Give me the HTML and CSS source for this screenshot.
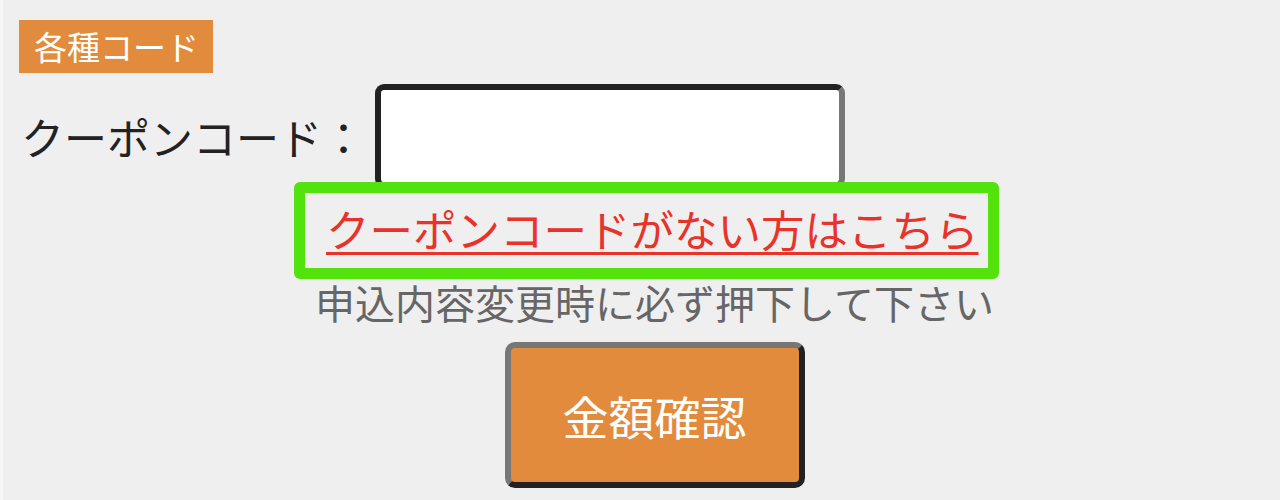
FILE: index.html
```html
<!DOCTYPE html>
<html lang="ja">
<head>
    <meta charset="UTF-8">
    <meta name="viewport" content="width=device-width, initial-scale=1.0">
    <title>各種コード</title>
    <link rel="stylesheet" href="styles.css">
</head>
<body>
    <div class="page">
        <div class="badge">各種コード</div>
        <div class="coupon-row">
            <label class="coupon-label" for="coupon">クーポンコード：</label>
            <input type="text" id="coupon" class="coupon-input">
        </div>
        <div class="actions">
            <a href="#" class="no-coupon">クーポンコードがない方はこちら</a>
            <p class="note">申込内容変更時に必ず押下して下さい</p>
            <button class="confirm">金額確認</button>
        </div>
    </div>
</body>
</html>
```

FILE: styles.css
```css
body {
    margin: 0;
    background-color: #efefef;
    font-family: "Noto Sans CJK JP", "Noto Sans", sans-serif;
    color: #222222;
}
.page {
    min-height: 100vh;
    box-sizing: border-box;
    border-left: 3px solid #f6f6f6;
    padding: 20px 0 0 16px;
}
.badge {
    display: inline-block;
    background-color: #e38b3c;
    color: #ffffff;
    font-size: 33px;
    line-height: 53px;
    padding: 0 14px 0 15px;
}
.coupon-row {
    display: flex;
    align-items: flex-start;
    margin-top: 11px;
}
.coupon-label {
    font-size: 43px;
    line-height: 104px;
    margin-left: 2px;
    width: 354px;
    white-space: nowrap;
}
.coupon-input {
    box-sizing: border-box;
    width: 470px;
    height: 104px;
    border: 6px solid;
    border-color: #222222 #777777 #777777 #222222;
    border-radius: 9px;
    background-color: #ffffff;
    font-size: 40px;
    outline: none;
}
.actions {
    display: flex;
    flex-direction: column;
    align-items: center;
    padding-left: 10px;
}
.no-coupon {
    position: relative;
    display: block;
    margin-top: -6px;
    margin-left: -16px;
    width: 705px;
    box-sizing: border-box;
    border: 11px solid #54e20e;
    border-radius: 6px;
    background-color: #efefef;
    padding: 0 0 4px 21px;
    color: #e8322a;
    font-size: 43.5px;
    line-height: 71px;
    white-space: nowrap;
    text-underline-offset: 5px;
    text-decoration-thickness: 3px;
}
.note {
    margin: 0;
    font-size: 40px;
    line-height: 46px;
    color: #666666;
}
.confirm {
    margin-top: 17px;
    width: 300px;
    height: 146px;
    border: 6px solid;
    border-color: #777777 #222222 #222222 #777777;
    border-radius: 10px;
    background-color: #e38b3c;
    color: #ffffff;
    font-family: "Noto Sans CJK JP", "Noto Sans", sans-serif;
    font-size: 46px;
}
```
